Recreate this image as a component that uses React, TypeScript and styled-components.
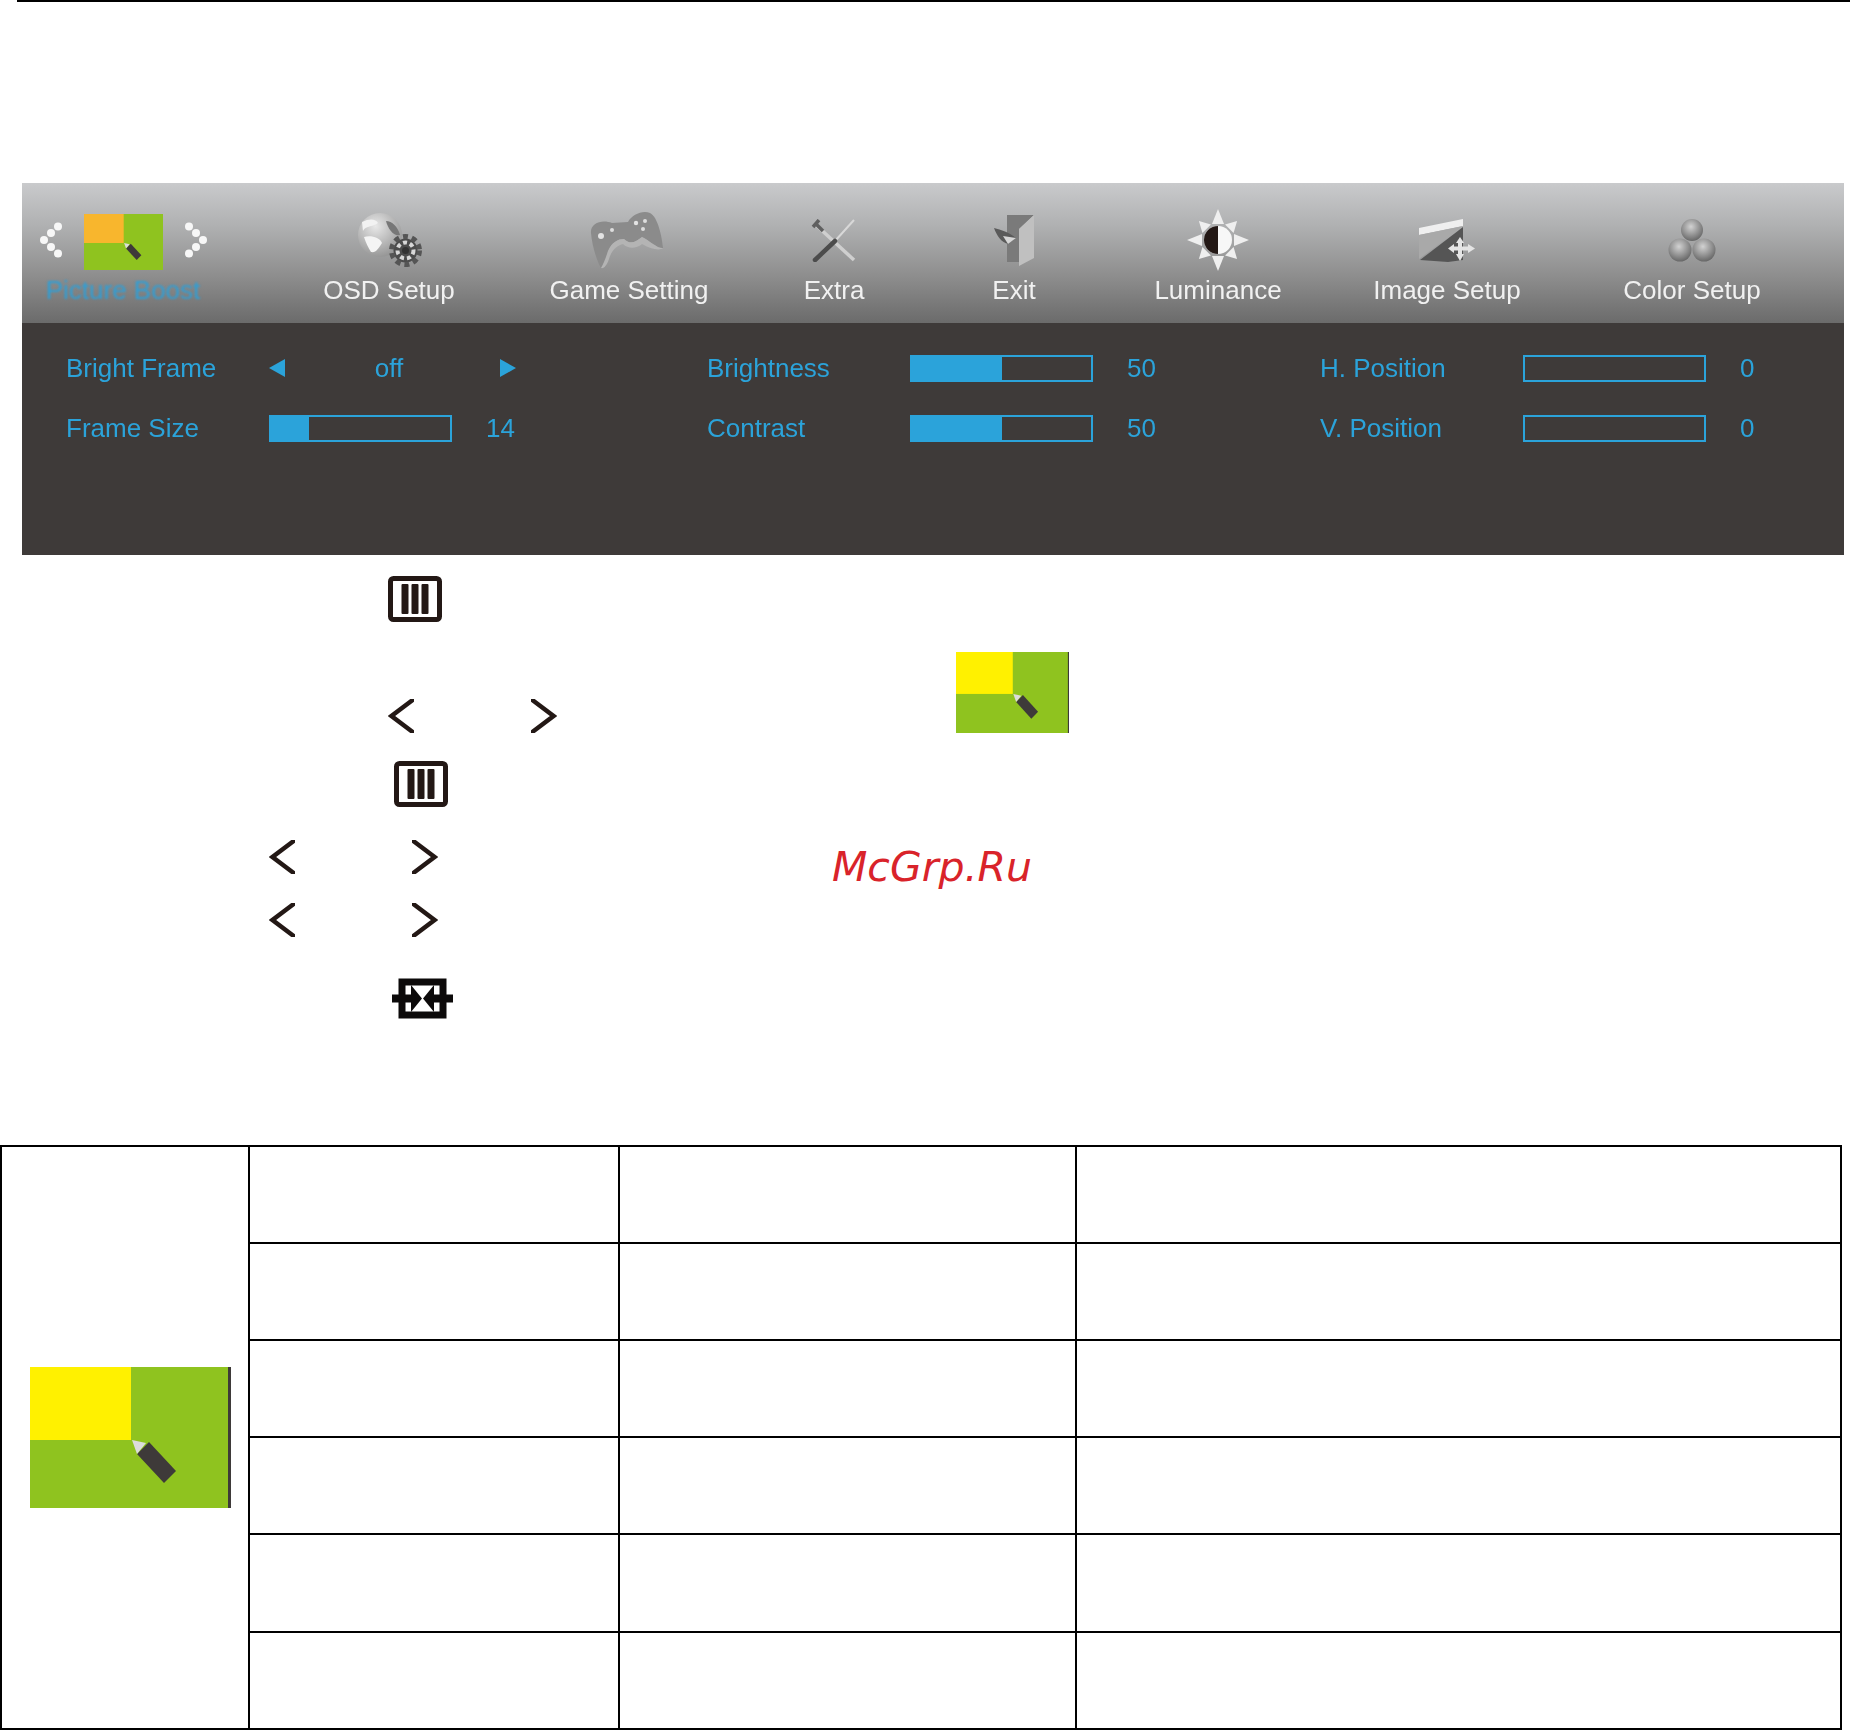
import React from "react";
import styled, { createGlobalStyle } from "styled-components";

const BLUE = "#2ba3da";
const INK = "#231815";

const GlobalStyle = createGlobalStyle`
  html, body {
    margin: 0;
    padding: 0;
    background: #fff;
  }
  body {
    font-family: "Liberation Sans", Arial, sans-serif;
  }
`;

const Page = styled.div`
  width: 1850px;
  height: 1730px;
  overflow: hidden;
  background: #fff;
`;

const TopRule = styled.div`
  height: 2px;
  margin-left: 17px;
  background: #000;
`;

const Panel = styled.section`
  width: 1822px;
  margin: 181px 0 0 22px;
  height: 372px;
  background: #3e3a39;
`;

const Tabs = styled.div`
  display: grid;
  grid-template-columns: 220px 294px 186px 224px 136px 272px 186px 304px;
  height: 140px;
  background: linear-gradient(#c9cacc 0%, #b0b1b2 30%, #8f8f8f 65%, #6b6b6b 100%);
`;

const Tab = styled.div<{ $inset?: number }>`
  display: flex;
  flex-direction: column;
  align-items: center;
  padding: 25px ${(p) => p.$inset || 0}px 0 0;
`;

const TabIcon = styled.div`
  display: flex;
  align-items: center;
  justify-content: center;
  gap: 22px;
  height: 64px;
`;

const HeaderThumb = styled.div`
  width: 79px;
  height: 56px;
  margin-top: 4px;
`;

const TabLabel = styled.div<{ $active?: boolean }>`
  height: 36px;
  line-height: 36px;
  font-size: 26px;
  white-space: nowrap;
  color: ${(p) => (p.$active ? "#2f9fd6" : "#f1f1f1")};
  filter: blur(${(p) => (p.$active ? "1.3px" : "0.5px")});
`;

const Settings = styled.div`
  display: grid;
  grid-template-columns: 641px 613px 1fr;
  padding: 15px 0 0 44px;
  filter: blur(0.4px);
`;

const SettingGroup = styled.div`
  display: grid;
  grid-template-columns: 203px 183px 1fr;
  grid-auto-rows: 60px;
  align-items: center;
`;

const SettingLabel = styled.div`
  font-size: 26px;
  color: ${BLUE};
  white-space: nowrap;
`;

const SettingValue = styled.div`
  padding-left: 34px;
  font-size: 26px;
  color: ${BLUE};
`;

const Track = styled.div`
  height: 27px;
  box-sizing: border-box;
  border: 2px solid ${BLUE};
`;

const Fill = styled.div`
  height: 100%;
  background: ${BLUE};
`;

const Toggle = styled.div`
  grid-column: 2 / span 2;
  display: flex;
  align-items: center;
  justify-content: space-between;
  width: 247px;
  font-size: 26px;
  color: ${BLUE};
`;

const ToggleValue = styled.span`
  margin-right: 7px;
`;

const Triangle = styled.span<{ $dir: "left" | "right" }>`
  width: 0;
  height: 0;
  border-top: 9px solid transparent;
  border-bottom: 9px solid transparent;
  ${(p) => (p.$dir === "left" ? `border-right: 16px solid ${BLUE};` : `border-left: 16px solid ${BLUE};`)}
`;

const Legend = styled.section`
  height: 590px;
  box-sizing: border-box;
  padding-top: 21px;
`;

const KeyRow = styled.div<{ $left: number; $top?: number; $height?: number }>`
  display: flex;
  align-items: flex-end;
  padding-left: ${(p) => p.$left}px;
  margin-top: ${(p) => p.$top || 0}px;
  height: ${(p) => (p.$height ? `${p.$height}px` : "auto")};

  & > svg {
    display: block;
    flex: none;
  }
`;

const ArrowPair = styled.div`
  display: flex;
  gap: 117px;
  flex: none;

  & > svg {
    display: block;
  }
`;

const InlineThumb = styled.div<{ $left: number }>`
  margin-left: ${(p) => p.$left}px;
  width: 113px;
  height: 81px;
`;

const Watermark = styled.div`
  margin: 0 0 -15px 394px;
  font-family: "DejaVu Sans", sans-serif;
  font-style: italic;
  font-size: 41px;
  line-height: 44px;
  color: #d9232a;
`;

const SpecTable = styled.table`
  width: 1842px;
  table-layout: fixed;
  border-collapse: collapse;
  border: 2px solid #000;

  td {
    height: 95px;
    padding: 0;
    border: 2px solid #000;
  }

  tr:nth-child(5) td {
    height: 96px;
  }
`;

const ThumbCell = styled.td`
  vertical-align: middle;
  padding-left: 28px !important;
`;

const BigThumb = styled.div`
  width: 201px;
  height: 141px;
`;

const Thumb: React.FC<{ accent?: string; stripe?: number }> = ({ accent = "#fff100", stripe = 0 }) => (
  <svg width="100%" height="100%" viewBox="0 0 201 141" preserveAspectRatio="none" style={{ display: "block" }}>
    <rect width="201" height="141" fill="#8fc31f" />
    <rect width="101" height="73" fill={accent} />
    {stripe > 0 && <rect x={201 - stripe} width={stripe} height="141" fill="#3e3a39" />}
    <polygon points="107,87 119,75 146,104 134,116" fill="#3e3a39" />
    <polygon points="102,73 116,76 107,87" fill="#dcdcdc" />
  </svg>
);

const DotChevron: React.FC<{ flip?: boolean }> = ({ flip }) => (
  <svg width="22" height="36" viewBox="0 0 22 36" style={flip ? { transform: "scaleX(-1)" } : undefined}>
    {[[18, 4.5], [11, 11], [4, 18], [11, 25], [18, 31.5]].map(([x, y], i) => (
      <circle key={i} cx={x} cy={y} r="4" fill="#f7f7f7" />
    ))}
  </svg>
);

const GlobeIcon = () => (
  <svg width="66" height="54" viewBox="0 0 66 54">
    <defs>
      <radialGradient id="globe" cx="0.4" cy="0.3" r="0.8">
        <stop offset="0" stopColor="#e8e8e8" />
        <stop offset="1" stopColor="#8c8c8c" />
      </radialGradient>
    </defs>
    <circle cx="24" cy="22" r="22" fill="url(#globe)" />
    <path d="M6 9 C14 5 20 6 22 10 C18 14 10 12 7 18 Z" fill="#f2f2f2" />
    <path d="M8 24 C14 22 24 24 26 30 C22 36 20 40 15 39 C12 34 10 30 8 24 Z" fill="#f4f4f4" />
    <path d="M30 8 C36 8 42 14 44 22 C38 24 32 16 30 8 Z" fill="#777" />
    <circle cx="49.5" cy="37.5" r="12" fill="#4c4c4c" />
    <circle cx="49.5" cy="37.5" r="14" fill="none" stroke="#555" strokeWidth="5" strokeDasharray="5 4" />
    <circle cx="49.5" cy="37.5" r="8" fill="none" stroke="#d8d8d8" strokeWidth="4" strokeDasharray="4 3" />
    <circle cx="49.5" cy="37.5" r="3.5" fill="#333" />
  </svg>
);

const GamepadIcon = () => (
  <svg width="82" height="59" viewBox="0 0 82 59">
    <path d="M3 22 C2 12 14 8 24 12 L40 11 C44 4 54 -1 62 2 C70 6 74 26 75 37 C70 38 62 30 54 26 C48 31 42 34 36 28 C30 28 24 31 20 40 C18 50 16 58 13 57 C8 48 4 34 3 22 Z" fill="#8b8b8b" />
    <path d="M20 40 C24 31 30 28 36 28 C42 34 48 31 54 26 C62 30 70 38 75 37 C72 40 62 38 54 33 C48 38 40 38 35 33 C30 34 24 38 21 48 C19 54 16 58 13 57 C16 52 18 46 20 40 Z" fill="#b4b4b4" />
    <circle cx="13" cy="25" r="3" fill="#e3e3e3" />
    <circle cx="24" cy="19" r="2" fill="#dedede" />
    <circle cx="48" cy="12" r="2.2" fill="#e3e3e3" />
    <circle cx="57" cy="10" r="2" fill="#dedede" />
    <circle cx="55" cy="18" r="2" fill="#dedede" />
  </svg>
);

const ToolsIcon = () => (
  <svg width="46" height="43" viewBox="0 0 46 43">
    <line x1="5" y1="6" x2="43" y2="41" stroke="#cfcfcf" strokeWidth="3.5" />
    <path d="M2 8 L8 1 M4 4 L12 12" stroke="#5f5f5f" strokeWidth="3.5" fill="none" />
    <line x1="43" y1="1" x2="24" y2="22" stroke="#d8d8d8" strokeWidth="2" />
    <line x1="24" y1="22" x2="4" y2="41" stroke="#4c4c4c" strokeWidth="4.5" strokeLinecap="round" />
  </svg>
);

const DoorIcon = () => (
  <svg width="43" height="52" viewBox="0 0 43 52">
    <polygon points="14,1 41,1 26,15 26,48 14,48" fill="#7a7a7a" />
    <polygon points="41,1 41,44 26,52 26,15" fill="#c0c0c0" />
    <path d="M1 14 C8 16 16 18 23 24 L15 30 C8 28 4 22 1 14 Z" fill="#5a5a5a" />
    <path d="M10 22 L23 24 L15 30 Z" fill="#d6d6d6" />
  </svg>
);

const SunIcon = () => {
  const rays = [0, 45, 90, 135, 180, 225, 270, 315];
  return (
    <svg width="62" height="62" viewBox="0 0 62 62">
      {rays.map((deg) => (
        <polygon key={deg} points={deg % 90 === 0 ? "25,15 37,15 31,0" : "25,15 37,15 31,4"} fill="#efefef" transform={`rotate(${deg} 31 31)`} />
      ))}
      <circle cx="31" cy="31" r="14" fill="#f7f7f7" />
      <path d="M31 17 A14 14 0 0 0 31 45 Z" fill={INK} />
    </svg>
  );
};

const ImageIcon = () => (
  <svg width="58" height="43" viewBox="0 0 58 43">
    <polygon points="1,9 45,0 45,7 1,16" fill="#efefef" />
    <polygon points="1,16 45,7 1,40" fill="#a9a9a9" />
    <polygon points="2,41 45,8 45,41 30,43" fill="#555" />
    <g fill="#e4e4e4">
      <polygon points="42,18 38,24 46,24" />
      <polygon points="42,42 38,35 46,35" />
      <polygon points="30,29.500 36,25 36,34" />
      <polygon points="57,29.500 50,25 50,34" />
      <rect x="40" y="24" width="4" height="11" />
      <rect x="36" y="27.500" width="14" height="4" />
    </g>
  </svg>
);

const BallsIcon = () => (
  <svg width="48" height="45" viewBox="0 0 48 45">
    <defs>
      <radialGradient id="ball" cx="0.45" cy="0.35" r="0.7">
        <stop offset="0" stopColor="#d2d2d2" />
        <stop offset="1" stopColor="#5f5f5f" />
      </radialGradient>
    </defs>
    <circle cx="24" cy="12" r="11" fill="url(#ball)" />
    <circle cx="12" cy="32" r="11.5" fill="url(#ball)" />
    <circle cx="36" cy="32" r="11.5" fill="url(#ball)" />
  </svg>
);

const MenuKey = () => (
  <svg width="54" height="46" viewBox="0 0 54 46">
    <rect x="2.500" y="2.500" width="49" height="41" rx="3" fill="none" stroke={INK} strokeWidth="5" />
    <rect x="13.500" y="8" width="7" height="30" rx="1" fill={INK} />
    <rect x="23.500" y="8" width="7" height="30" rx="1" fill={INK} />
    <rect x="33.500" y="8" width="7" height="30" rx="1" fill={INK} />
  </svg>
);

const ArrowKey: React.FC<{ dir: "left" | "right" }> = ({ dir }) => (
  <svg width="26" height="34" viewBox="0 0 26 34">
    <path d={dir === "left" ? "M30 -3 L3.500 17 L30 37" : "M-4 -3 L22.500 17 L-4 37"} fill="none" stroke={INK} strokeWidth="4.500" />
  </svg>
);

const ArrowKeys = () => (
  <ArrowPair>
    <ArrowKey dir="left" />
    <ArrowKey dir="right" />
  </ArrowPair>
);

const SourceKey = () => (
  <svg width="61" height="41" viewBox="0 0 61 41">
    <rect x="10" y="4" width="41" height="33" fill="none" stroke="#0c0a0a" strokeWidth="7" />
    <rect x="0" y="16.500" width="22" height="8" fill="#0c0a0a" />
    <rect x="39" y="16.500" width="22" height="8" fill="#0c0a0a" />
    <polygon points="19,7 30,20.500 19,34" fill="#0c0a0a" />
    <polygon points="42,7 31,20.500 42,34" fill="#0c0a0a" />
  </svg>
);

const tabs = [
  { label: "OSD Setup", icon: <GlobeIcon /> },
  { label: "Game Setting", icon: <GamepadIcon /> },
  { label: "Extra", icon: <ToolsIcon /> },
  { label: "Exit", icon: <DoorIcon /> },
  { label: "Luminance", icon: <SunIcon /> },
  { label: "Image Setup", icon: <ImageIcon /> },
  { label: "Color Setup", icon: <BallsIcon /> },
];

const SliderRow: React.FC<{ label: string; value: number; percent: number }> = ({ label, value, percent }) => (
  <>
    <SettingLabel>{label}</SettingLabel>
    <Track>
      <Fill style={{ width: `${percent}%` }} />
    </Track>
    <SettingValue>{value}</SettingValue>
  </>
);

const rows = [0, 1, 2, 3, 4, 5];

export default function App() {
  return (
    <Page>
      <GlobalStyle />
      <TopRule />

      <Panel>
        <Tabs>
          <Tab $inset={18}>
            <TabIcon>
              <DotChevron />
              <HeaderThumb>
                <Thumb accent="#f8b62d" />
              </HeaderThumb>
              <DotChevron flip />
            </TabIcon>
            <TabLabel $active>Picture Boost</TabLabel>
          </Tab>
          {tabs.map((t) => (
            <Tab key={t.label}>
              <TabIcon>{t.icon}</TabIcon>
              <TabLabel>{t.label}</TabLabel>
            </Tab>
          ))}
        </Tabs>

        <Settings>
          <SettingGroup>
            <SettingLabel>Bright Frame</SettingLabel>
            <Toggle>
              <Triangle $dir="left" />
              <ToggleValue>off</ToggleValue>
              <Triangle $dir="right" />
            </Toggle>
            <SliderRow label="Frame Size" value={14} percent={21} />
          </SettingGroup>
          <SettingGroup>
            <SliderRow label="Brightness" value={50} percent={50} />
            <SliderRow label="Contrast" value={50} percent={50} />
          </SettingGroup>
          <SettingGroup>
            <SliderRow label="H. Position" value={0} percent={0} />
            <SliderRow label="V. Position" value={0} percent={0} />
          </SettingGroup>
        </Settings>
      </Panel>

      <Legend>
        <KeyRow $left={388}>
          <MenuKey />
        </KeyRow>
        <KeyRow $left={388} $top={30} $height={81}>
          <ArrowKeys />
          <InlineThumb $left={399}>
            <Thumb stripe={2} />
          </InlineThumb>
        </KeyRow>
        <KeyRow $left={394} $top={28}>
          <MenuKey />
        </KeyRow>
        <KeyRow $left={269} $top={33} $height={34}>
          <ArrowKeys />
          <Watermark>McGrp.Ru</Watermark>
        </KeyRow>
        <KeyRow $left={269} $top={29}>
          <ArrowKeys />
        </KeyRow>
        <KeyRow $left={392} $top={41}>
          <SourceKey />
        </KeyRow>
      </Legend>

      <SpecTable>
        <colgroup>
          <col style={{ width: 248 }} />
          <col style={{ width: 370 }} />
          <col style={{ width: 457 }} />
          <col />
        </colgroup>
        <tbody>
          {rows.map((r) => (
            <tr key={r}>
              {r === 0 && (
                <ThumbCell rowSpan={6}>
                  <BigThumb>
                    <Thumb stripe={3} />
                  </BigThumb>
                </ThumbCell>
              )}
              <td />
              <td />
              <td />
            </tr>
          ))}
        </tbody>
      </SpecTable>
    </Page>
  );
}
